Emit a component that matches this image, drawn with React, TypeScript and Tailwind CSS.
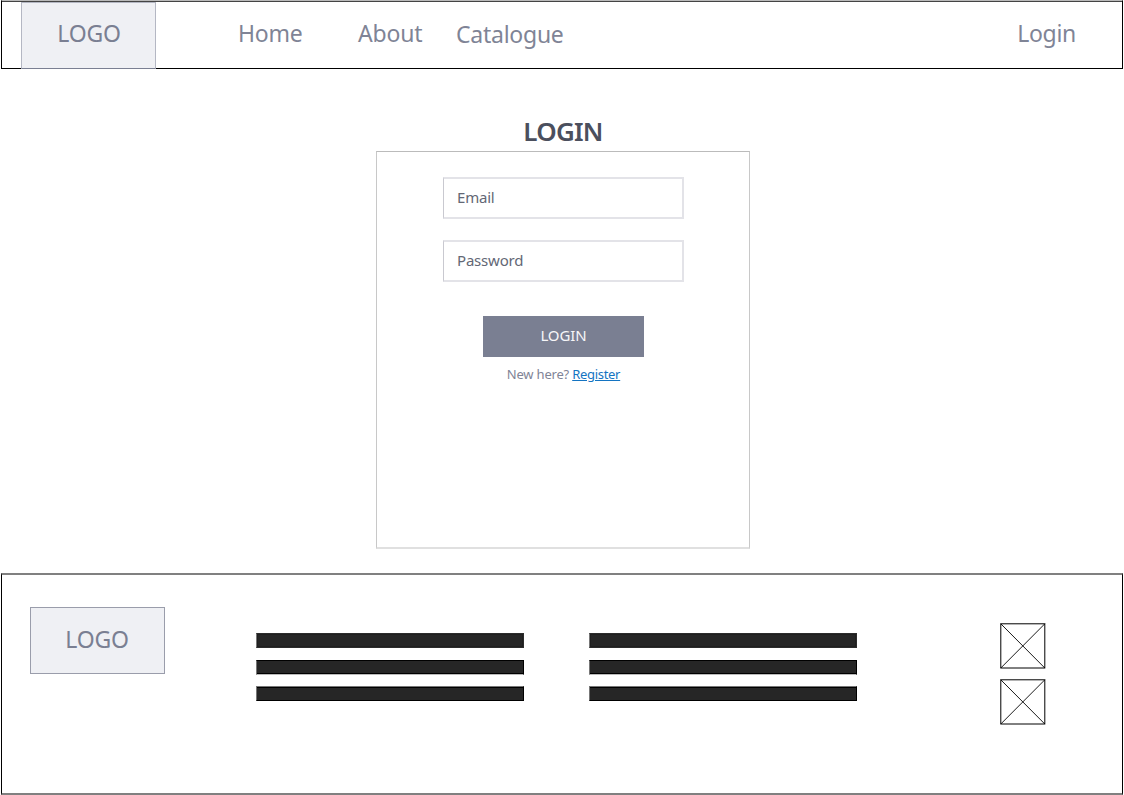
import React from "react";

function Logo({ className = "" }: { className?: string }) {
  return (
    <div className={`flex shrink-0 items-center justify-center border bg-[#eff0f4] text-[23px] leading-none tracking-[-0.2px] text-[#7a7f92] ${className}`}>
      <span>LOGO</span>
    </div>
  );
}

function TextLines({ className = "" }: { className?: string }) {
  return (
    <div className={`flex w-[268px] shrink-0 flex-col pt-[58px] ${className}`}>
      <div className="h-[15px] border border-[#2c2c2c] border-l-[#777777] bg-[#1f1f1f] p-px">
        <div className="h-full bg-[#262626]" />
      </div>
      <div className="mt-[12px] h-[15px] border border-black border-b-[#bbbbbb] border-l-[#777777] bg-[#262626]">
        <div className="h-full border-b border-black" />
      </div>
      <div className="mt-[11px] h-[15px] border border-black border-t-[#777777] border-l-[#777777] bg-[#262626]">
        <div className="h-full border-t border-black" />
      </div>
    </div>
  );
}

function CrossBox() {
  return (
    <svg className="h-[46px] w-[46px]" viewBox="0 0 46 46" fill="none" stroke="black">
      <rect x="0.8" y="0.8" width="44" height="44.2" strokeWidth="1" />
      <path d="M0.8 0.8 L44.8 45 M44.8 0.8 L0.8 45" strokeWidth="0.9" />
    </svg>
  );
}

function Field({ label, type }: { label: string; type: string }) {
  return (
    <input
      type={type}
      aria-label={label}
      placeholder={label}
      className="block h-[42px] w-[241px] border-2 border-l border-[#e3e3e8] border-l-[#c9c9d0] bg-white pb-[2px] pl-[13px] text-[15px] tracking-[-0.2px] placeholder:text-[#636775] placeholder:opacity-100"
    />
  );
}

export default function App() {
  return (
    <div className="flex h-[795px] w-[1124px] flex-col overflow-hidden bg-white px-px font-['Noto_Sans','Open_Sans',sans-serif] text-[#7f8496]">
      <header className="flex h-[69px] shrink-0 border border-black border-t-[#b9b9b9] pl-[19px] text-[23px] leading-[32px] shadow-[inset_0_1px_0_#444444]">
        <Logo className="mt-px h-[67px] w-[135px] border-[#b4b7c3] border-b-[#7a7f92] pb-[4px] pl-px" />
        <nav className="flex pt-[16px]">
          <a className="ml-[82px] w-[120px] tracking-[-0.2px]">Home</a>
          <a className="w-[98px] tracking-[-0.2px]">About</a>
          <a className="pt-px tracking-[-0.25px]">Catalogue</a>
        </nav>
        <a className="mr-[46px] ml-auto pt-[16px] tracking-[-0.3px]">Login</a>
      </header>

      <main className="flex h-[504px] shrink-0 flex-col items-center pt-[44px] pl-[2px]">
        <h1 className="h-[38px] text-[26px] leading-[36px] font-semibold tracking-[-0.8px] text-[#4b4f5d]">LOGIN</h1>
        <form className="flex h-[398px] w-[374px] flex-col border-x border-t border-b-2 border-[#e0e0e0] border-x-[#c8c8c8] border-t-[#bbbbbb] pt-[25px] pl-[66px]">
          <Field label="Email" type="email" />
          <div className="h-[21px]" />
          <Field label="Password" type="password" />
          <button type="button" className="mt-[34px] ml-[40px] h-[41px] w-[161px] bg-[#7a7f92] pb-[2px] text-[15px] tracking-[-0.1px] text-[#f6f6f8]">
            LOGIN
          </button>
          <p className="mt-[8px] w-[241px] text-center text-[13px] leading-[18px] tracking-[-0.2px]">
            New here? <a className="tracking-[-0.3px] text-[#1474c2] underline">Register</a>
          </p>
        </form>
      </main>

      <footer className="flex h-[222px] shrink-0 border border-y-2 border-black border-y-[#808080] pl-[28px]">
        <Logo className="mt-[32px] h-[67px] w-[135px] border-[#9a9dab] pr-px pb-[2px]" />
        <TextLines className="ml-[91px]" />
        <TextLines className="ml-[65px]" />
        <div className="ml-[143px] flex flex-col gap-[10px] pt-[48px]">
          <CrossBox />
          <CrossBox />
        </div>
      </footer>
    </div>
  );
}
